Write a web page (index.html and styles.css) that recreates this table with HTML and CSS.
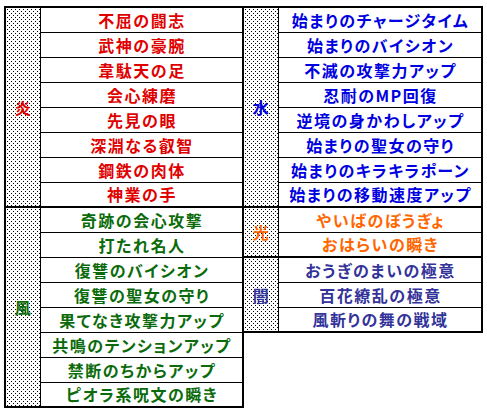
FILE: index.html
```html
<!DOCTYPE html>
<html lang="ja">
<head>
<meta charset="utf-8">
<title>スキル一覧</title>
<link rel="stylesheet" href="styles.css">
</head>
<body>
<table class="skills">
  <colgroup>
    <col class="c-label"><col class="c-name"><col class="c-label"><col class="c-name2">
  </colgroup>
  <tbody>
    <tr>
      <td class="label fire" rowspan="8">炎</td>
      <td class="name fire first">不屈の闘志</td>
      <td class="label water" rowspan="8">水</td>
      <td class="name water first">始まりのチャージタイム</td>
    </tr>
    <tr><td class="name fire">武神の豪腕</td><td class="name water">始まりのバイシオン</td></tr>
    <tr><td class="name fire">韋駄天の足</td><td class="name water">不滅の攻撃力アップ</td></tr>
    <tr><td class="name fire">会心練磨</td><td class="name water">忍耐のMP回復</td></tr>
    <tr><td class="name fire">先見の眼</td><td class="name water">逆境の身かわしアップ</td></tr>
    <tr><td class="name fire">深淵なる叡智</td><td class="name water">始まりの聖女の守り</td></tr>
    <tr><td class="name fire">鋼鉄の肉体</td><td class="name water">始まりのキラキラポーン</td></tr>
    <tr><td class="name fire last">神業の手</td><td class="name water last">始まりの移動速度アップ</td></tr>
    <tr>
      <td class="label wind" rowspan="8">風</td>
      <td class="name wind first">奇跡の会心攻撃</td>
      <td class="label light" rowspan="2">光</td>
      <td class="name light first">やいばのぼうぎょ</td>
    </tr>
    <tr><td class="name wind">打たれ名人</td><td class="name light last">おはらいの瞬き</td></tr>
    <tr>
      <td class="name wind">復讐のバイシオン</td>
      <td class="label dark" rowspan="3">闇</td>
      <td class="name dark first">おうぎのまいの極意</td>
    </tr>
    <tr><td class="name wind">復讐の聖女の守り</td><td class="name dark">百花繚乱の極意</td></tr>
    <tr><td class="name wind">果てなき攻撃力アップ</td><td class="name dark last">風斬りの舞の戦域</td></tr>
    <tr><td class="name wind">共鳴のテンションアップ</td><td class="void" colspan="2"></td></tr>
    <tr><td class="name wind">禁断のちからアップ</td><td class="void" colspan="2"></td></tr>
    <tr><td class="name wind last">ピオラ系呪文の瞬き</td><td class="void" colspan="2"></td></tr>
  </tbody>
</table>
</body>
</html>
```
FILE: styles.css
```css
html, body {
  margin: 0;
  padding: 0;
  background: #ffffff;
}

body {
  padding: 6px 0 0 4px;
  font-family: "Noto Sans CJK JP", "Noto Sans", sans-serif;
}

.skills {
  border-collapse: collapse;
  table-layout: fixed;
  width: 477px;
}

.c-label { width: 35px; }
.c-name { width: 203px; }
.c-name2 { width: 204px; }

.skills td {
  height: 24px;
  padding: 0 0 0 1.5px;
  border: 1px solid #000;
  text-align: center;
  vertical-align: middle;
  font-size: 16px;
  font-weight: 700;
  line-height: 20px;
  letter-spacing: 1.5px;
  font-feature-settings: "palt";
  white-space: nowrap;
}

.skills td.label {
  padding: 0;
  letter-spacing: 0;
  border: 2px solid #000;
  border-right-width: 1px;
  background-color: #fff;
  background-image:
    radial-gradient(circle at 0.5px 0.5px, #000 0.5px, transparent 0.8px),
    radial-gradient(circle at 0.5px 0.5px, #000 0.5px, transparent 0.8px);
  background-size: 4px 4px, 4px 4px;
  background-position: 1px 1px, 3px 3px;
}

.skills td.name {
  border-right-width: 2px;
}

.skills td.first {
  border-top-width: 2px;
  height: 23.5px;
}

.skills td.last {
  border-bottom-width: 2px;
  height: 23.5px;
}

.skills td.void {
  border: none;
  background: transparent;
}

.fire { color: #e00000; }
.water { color: #0000e0; }
.wind { color: #0b6b0b; }
.light { color: #ff6600; }
.dark { color: #333399; }
```
